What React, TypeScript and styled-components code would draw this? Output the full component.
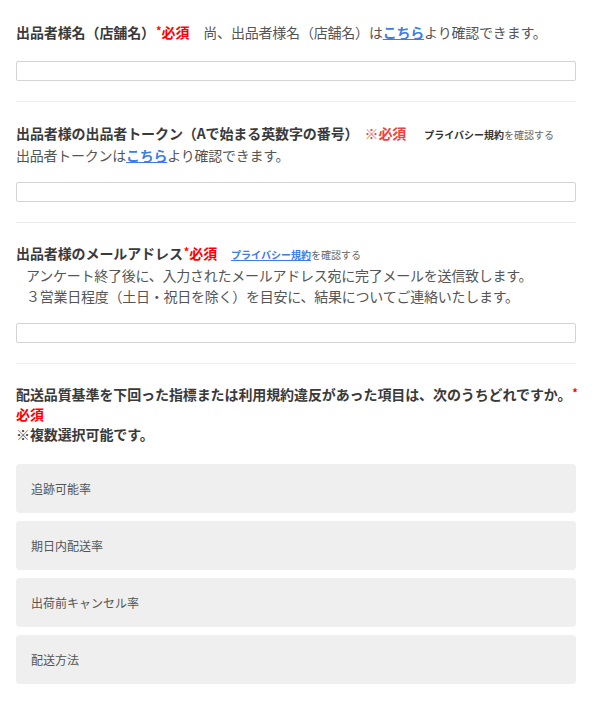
import React from "react";
import styled, { createGlobalStyle } from "styled-components";

const GlobalStyle = createGlobalStyle`
  html, body {
    margin: 0;
    padding: 0;
    background: #ffffff;
  }
  body {
    font-family: "Noto Sans CJK JP", "Noto Sans", sans-serif;
    color: #555555;
    -webkit-font-smoothing: antialiased;
  }
  * {
    box-sizing: border-box;
  }
`;

const options = ["追跡可能率", "期日内配送率", "出荷前キャンセル率", "配送方法"];

export default function App() {
  return (
    <>
      <GlobalStyle />
      <Form>
        <Section $top={22}>
          <Label>
            出品者様名（店舗名）
            <Required>
              <Star>*</Star>必須
            </Required>
            <Note>
              尚、出品者様名（店舗名）は<TextLink href="#">こちら</TextLink>より確認できます。
            </Note>
          </Label>
          <TextInput type="text" $gap={18} />
        </Section>

        <Section $top={21}>
          <Label $lineHeight={20}>
            出品者様の出品者トークン（Aで始まる英数字の番号）
            <Required $soft>※必須</Required>
            <Policy>
              <PolicyStrong>プライバシー規約</PolicyStrong>を確認する
            </Policy>
          </Label>
          <Body $lineHeight={20}>
            出品者トークンは<TextLink href="#">こちら</TextLink>より確認できます。
          </Body>
          <TextInput type="text" $gap={17} />
        </Section>

        <Section $top={20}>
          <Label>
            出品者様のメールアドレス
            <Required $tight>
              <Star>*</Star>必須
            </Required>
            <Policy>
              <PolicyLink href="#">プライバシー規約</PolicyLink>を確認する
            </Policy>
          </Label>
          <Body $indent={10}>
            アンケート終了後に、入力されたメールアドレス宛に完了メールを送信致します。
            <br />
            ３営業日程度（土日・祝日を除く）を目安に、結果についてご連絡いたします。
          </Body>
          <TextInput type="text" $gap={16} />
        </Section>

        <Section $top={20} $last>
          <Label $lineHeight={20}>
            <NoWrap>
              配送品質基準を下回った指標または利用規約違反があった項目は、次のうちどれですか。
              <Star $red>*</Star>
            </NoWrap>
            <br />
            <Required $tight>必須</Required>
            <br />
            ※複数選択可能です。
          </Label>
          <OptionList>
            {options.map((o) => (
              <Option key={o}>{o}</Option>
            ))}
          </OptionList>
        </Section>
      </Form>
    </>
  );
}

const Form = styled.div`
  width: 600px;
  padding: 0 24px 0 16px;
`;

const Section = styled.div<{ $top: number; $last?: boolean }>`
  padding-top: ${(p) => p.$top}px;
  padding-bottom: 20px;
  border-bottom: ${(p) => (p.$last ? "none" : "1px solid #ececec")};
`;

const Label = styled.div<{ $lineHeight?: number }>`
  font-size: 14px;
  line-height: ${(p) => p.$lineHeight ?? 21}px;
  font-weight: 700;
  color: #3a3a3a;
  letter-spacing: -0.1px;
`;

const NoWrap = styled.span`
  white-space: nowrap;
`;

const Required = styled.span<{ $soft?: boolean; $tight?: boolean }>`
  color: ${(p) => (p.$soft ? "#e8453c" : "#ff0000")};
  margin-left: ${(p) => (p.$soft ? "6px" : "0")};
  margin-right: ${(p) => (p.$tight ? "0" : "4px")};
`;

const Star = styled.span<{ $red?: boolean }>`
  font-size: 11px;
  vertical-align: top;
  line-height: 17px;
  color: ${(p) => (p.$red ? "#ff0000" : "inherit")};
  margin-left: 1px;
`;

const Note = styled.span`
  font-weight: 400;
  color: #555555;
  margin-left: 10px;
  letter-spacing: -0.2px;
`;

const TextLink = styled.a`
  color: #3b7ee6;
  font-weight: 700;
  text-decoration: underline;
`;

const Policy = styled.span`
  font-size: 10px;
  font-weight: 400;
  color: #666666;
  margin-left: 14px;
  letter-spacing: 0;
`;

const PolicyStrong = styled.span`
  font-weight: 700;
  color: #333333;
`;

const PolicyLink = styled.a`
  font-weight: 700;
  color: #3b7ee6;
  text-decoration: underline;
`;

const Body = styled.div<{ $indent?: number; $lineHeight?: number }>`
  font-size: 14px;
  line-height: ${(p) => p.$lineHeight ?? 21}px;
  color: #555555;
  padding-left: ${(p) => p.$indent ?? 0}px;
  letter-spacing: -0.25px;
`;

const TextInput = styled.input<{ $gap: number }>`
  display: block;
  width: 100%;
  height: 20px;
  margin: ${(p) => p.$gap}px 0 0;
  padding: 0 6px;
  border: 1px solid #d4d4d4;
  border-radius: 2px;
  background: #ffffff;
  outline: none;
`;

const OptionList = styled.div`
  display: flex;
  flex-direction: column;
  gap: 8.5px;
  margin-top: 20px;
`;

const Option = styled.div`
  height: 48.5px;
  display: flex;
  align-items: center;
  padding-left: 15px;
  background: #efefef;
  border-radius: 4px;
  font-size: 12px;
  color: #555555;
`;
